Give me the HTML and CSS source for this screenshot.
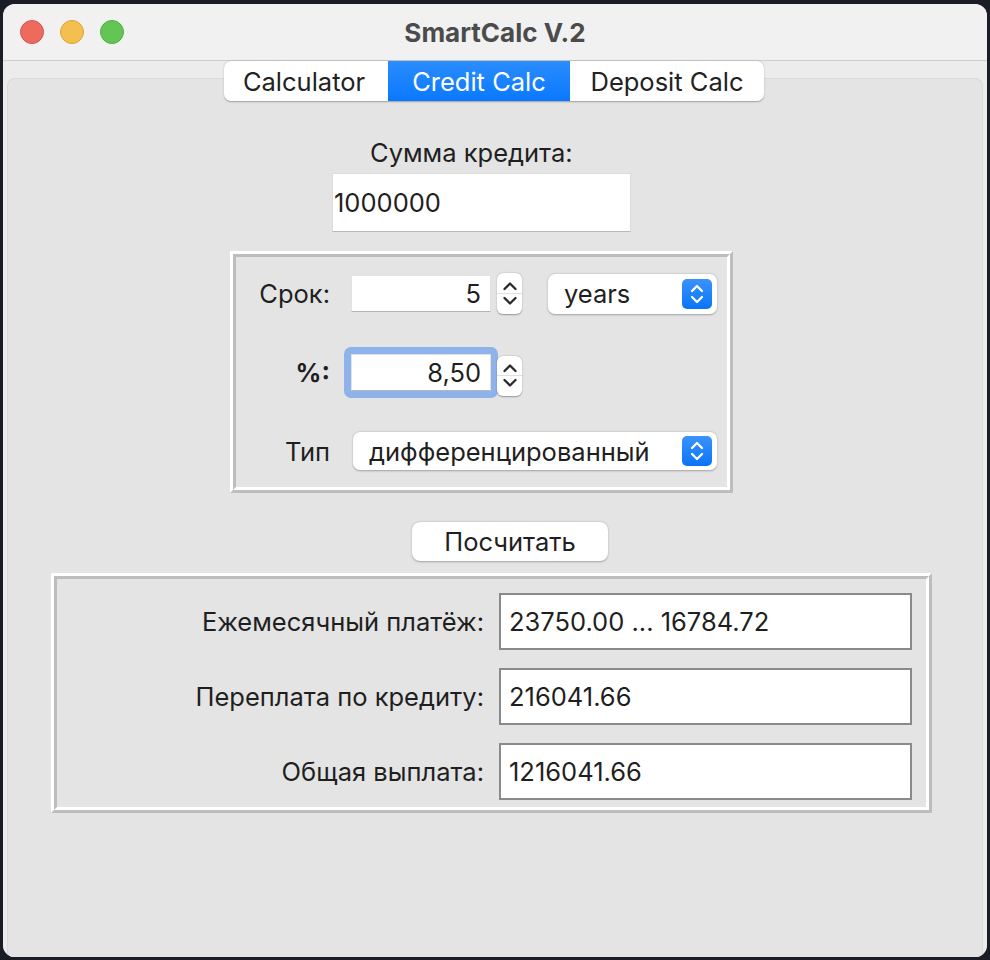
FILE: index.html
```html
<!DOCTYPE html>
<html lang="ru">
<head>
<meta charset="utf-8">
<title>SmartCalc V.2</title>
<link rel="stylesheet" href="styles.css">
</head>
<body>
<div class="window">
  <div class="titlebar">
    <div class="lights">
      <span class="light red"></span>
      <span class="light yellow"></span>
      <span class="light green"></span>
    </div>
    <div class="title">SmartCalc V.2</div>
  </div>
  <div class="content">
    <div class="tabs">
      <div class="tab tab-calc">Calculator</div>
      <div class="tab tab-credit active">Credit Calc</div>
      <div class="tab tab-deposit">Deposit Calc</div>
    </div>
    <div class="pane">
      <div class="sum-label">Сумма кредита:</div>
      <div class="sum-input">1000000</div>

      <div class="group group-params">
        <div class="group-inner params-inner">
          <div class="row row-term">
            <div class="lbl">Срок:</div>
            <div class="spin-field">5</div>
            <div class="spin-arrows">
              <svg class="chev" width="18" height="13" viewBox="0 0 18 13"><path d="M3.5 10 L9 4.5 L14.5 10" fill="none" stroke="#2a2a2a" stroke-width="2.3" stroke-linecap="round" stroke-linejoin="round"/></svg>
              <div class="spin-div"></div>
              <svg class="chev" width="18" height="13" viewBox="0 0 18 13"><path d="M3.5 3 L9 8.5 L14.5 3" fill="none" stroke="#2a2a2a" stroke-width="2.3" stroke-linecap="round" stroke-linejoin="round"/></svg>
            </div>
            <div class="combo combo-years">
              <span class="combo-text">years</span>
              <span class="combo-btn">
                <svg width="18" height="24" viewBox="0 0 18 24"><path d="M4 9 L9 4 L14 9 M4 15 L9 20 L14 15" fill="none" stroke="#fff" stroke-width="2.3" stroke-linecap="round" stroke-linejoin="round"/></svg>
              </span>
            </div>
          </div>
          <div class="row row-rate">
            <div class="lbl lbl-bold">%:</div>
            <div class="focus-ring"><div class="spin-field">8,50</div></div>
            <div class="spin-arrows spin-arrows-rate">
              <svg class="chev" width="18" height="13" viewBox="0 0 18 13"><path d="M3.5 10 L9 4.5 L14.5 10" fill="none" stroke="#2a2a2a" stroke-width="2.3" stroke-linecap="round" stroke-linejoin="round"/></svg>
              <div class="spin-div"></div>
              <svg class="chev" width="18" height="13" viewBox="0 0 18 13"><path d="M3.5 3 L9 8.5 L14.5 3" fill="none" stroke="#2a2a2a" stroke-width="2.3" stroke-linecap="round" stroke-linejoin="round"/></svg>
            </div>
          </div>
          <div class="row row-type">
            <div class="lbl">Тип</div>
            <div class="combo combo-type">
              <span class="combo-text">дифференцированный</span>
              <span class="combo-btn">
                <svg width="18" height="24" viewBox="0 0 18 24"><path d="M4 9 L9 4 L14 9 M4 15 L9 20 L14 15" fill="none" stroke="#fff" stroke-width="2.3" stroke-linecap="round" stroke-linejoin="round"/></svg>
              </span>
            </div>
          </div>
        </div>
      </div>

      <div class="calc-btn">Посчитать</div>

      <div class="group group-results">
        <div class="group-inner results-inner">
          <div class="res-row">
            <div class="res-lbl">Ежемесячный платёж:</div>
            <div class="res-box">23750.00 ... 16784.72</div>
          </div>
          <div class="res-row">
            <div class="res-lbl">Переплата по кредиту:</div>
            <div class="res-box">216041.66</div>
          </div>
          <div class="res-row">
            <div class="res-lbl">Общая выплата:</div>
            <div class="res-box">1216041.66</div>
          </div>
        </div>
      </div>
    </div>
  </div>
</div>
</body>
</html>
```
FILE: styles.css
```css
* { box-sizing: border-box; }
html, body { margin: 0; padding: 0; }
body {
  background: #1a1d26;
  width: 990px;
  height: 960px;
  overflow: hidden;
  font-family: Inter, "Liberation Sans", Arial, sans-serif;
  font-size: 25.5px;
  color: #1f1f1f;
  padding: 4px 3px 0 3px;
}
.window {
  width: 984px;
  height: 953px;
  background: #e4e4e4;
  border-radius: 12px;
  overflow: hidden;
  display: flex;
  flex-direction: column;
}
.titlebar {
  height: 57px;
  background: #f0f1f0;
  border-bottom: 1px solid #cdcdcd;
  display: flex;
  align-items: center;
  position: relative;
  flex-shrink: 0;
}
.lights {
  display: flex;
  gap: 16px;
  padding-left: 17px;
}
.light {
  width: 24px;
  height: 24px;
  border-radius: 50%;
  display: block;
}
.red { background: #ed6a5e; border: 1px solid #d65549; }
.yellow { background: #f5bf4f; border: 1px solid #dca53b; }
.green { background: #62c554; border: 1px solid #4fae42; }
.title {
  position: absolute;
  left: 0;
  right: 0;
  top: 0;
  bottom: 0;
  display: flex;
  align-items: center;
  justify-content: center;
  font-weight: 700;
  color: #4b4b4b;
  font-size: 26px;
  padding-left: 0;
}
.content {
  flex: 1;
  background: #ececec;
  padding: 0 4px;
  display: flex;
  flex-direction: column;
}
.tabs {
  position: relative;
  z-index: 1;
  display: flex;
  margin-left: 217px;
  width: 540px;
  height: 40px;
  background: #fff;
  border-radius: 7px;
  box-shadow: 0 0.5px 1.5px rgba(0,0,0,0.3);
  overflow: hidden;
}
.tab {
  display: flex;
  align-items: center;
  justify-content: center;
  height: 100%;
  color: #222;
}
.tab-calc { width: 164px; padding-right: 4px; }
.tab-credit { width: 182px; }
.tab-deposit { width: 194px; }
.tab.active {
  background: linear-gradient(#2b8dfd, #0a78ff);
  color: #fff;
}
.pane {
  flex: 1;
  margin-top: -23px;
  background: #e4e4e4;
  border: 1px solid #dadada;
  border-bottom: none;
  border-radius: 8px 8px 0 0;
  display: flex;
  flex-direction: column;
  align-items: flex-start;
}
.sum-label {
  margin-top: 59px;
  margin-left: 362px;
  height: 30px;
  line-height: 30px;
}
.sum-input {
  margin-top: 5px;
  margin-left: 324px;
  width: 299px;
  height: 59px;
  background: #fff;
  border: 1px solid #dcdcdc;
  border-bottom-color: #b9b9b9;
  padding-left: 1px;
  display: flex;
  align-items: center;
}
.group {
  border: 3px solid;
  border-color: #ffffff #bdbdbd #bdbdbd #ffffff;
}
.group-inner {
  border: 3px solid;
  border-color: #bdbdbd #ffffff #ffffff #bdbdbd;
  height: 100%;
}
.group-params {
  margin-top: 19px;
  margin-left: 222px;
  width: 503px;
  height: 242px;
}
.params-inner {
  padding-top: 16px;
  display: flex;
  flex-direction: column;
}
.row {
  display: flex;
  align-items: center;
}
.lbl {
  width: 94px;
  text-align: right;
  flex-shrink: 0;
}
.lbl-bold { font-weight: 700; }
.row-term { height: 41px; }
.row-term .spin-field { margin-left: 21px; }
.spin-field {
  width: 140px;
  height: 37px;
  background: #fff;
  border: 1px solid #e2e2e2;
  border-bottom-color: #b5b5b5;
  text-align: right;
  padding-right: 9px;
  display: flex;
  align-items: center;
  justify-content: flex-end;
}
.spin-arrows {
  width: 25px;
  height: 41px;
  margin-left: 6px;
  background: #fff;
  border-radius: 6px;
  box-shadow: 0 0.5px 1.5px rgba(0,0,0,0.35);
  display: flex;
  flex-direction: column;
  align-items: center;
  justify-content: center;
}
.chev { display: block; }
.spin-div {
  width: 25px;
  height: 1px;
  background: #e0e0e0;
  margin: 1px 0;
}
.combo {
  height: 40px;
  background: #fff;
  border-radius: 7px;
  box-shadow: 0 0.5px 2px rgba(0,0,0,0.3);
  display: flex;
  align-items: center;
  justify-content: space-between;
  padding: 0 5px 0 16px;
}
.combo-years { width: 169px; margin-left: 26px; }
.combo-btn {
  width: 30px;
  height: 30px;
  border-radius: 5px;
  background: linear-gradient(#3b93fb, #0a74f6);
  display: flex;
  align-items: center;
  justify-content: center;
}
.combo-btn svg { display: block; }
.row-rate {
  margin-top: 34px;
  height: 49px;
}
.focus-ring {
  margin-left: 14px;
  padding: 7px;
  background: #8db3ea;
  border-radius: 7px;
}
.spin-arrows-rate {
  margin-left: -1px;
  margin-top: 6px;
  height: 40px;
}
.row-type {
  margin-top: 35px;
  height: 38px;
}
.combo-type {
  width: 364px;
  height: 38px;
  margin-left: 23px;
}
.calc-btn {
  margin-top: 29px;
  margin-left: 404px;
  width: 196px;
  height: 39px;
  background: #fff;
  border-radius: 8px;
  box-shadow: 0 0.5px 2px rgba(0,0,0,0.3);
  display: flex;
  align-items: center;
  justify-content: center;
}
.group-results {
  margin-top: 12px;
  margin-left: 43px;
  width: 881px;
  height: 240px;
}
.results-inner {
  padding-top: 14px;
  display: flex;
  flex-direction: column;
  gap: 18px;
}
.res-row {
  display: flex;
  align-items: center;
}
.res-lbl {
  width: 442px;
  text-align: right;
  padding-right: 15px;
}
.res-box {
  width: 413px;
  height: 57px;
  background: #fff;
  border: 2px solid #8a8a8a;
  padding-left: 8px;
  display: flex;
  align-items: center;
}
```
